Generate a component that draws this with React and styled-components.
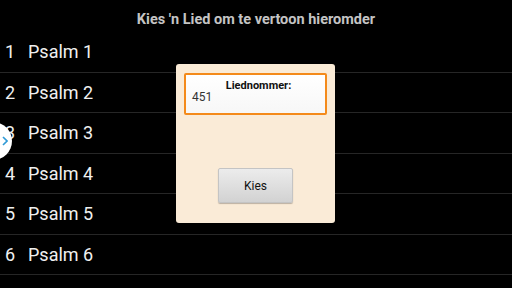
import React from 'react';
import styled, { createGlobalStyle } from 'styled-components';

const Global = createGlobalStyle`
  html, body { margin: 0; padding: 0; background: #000; }
  body { width: 512px; height: 288px; overflow: hidden; font-family: Roboto, "Liberation Sans", sans-serif; }
`;

const Screen = styled.div`
  position: relative;
  width: 512px;
  height: 288px;
  background: #000;
  overflow: hidden;
`;

const Title = styled.div`
  height: 32px;
  padding-top: 12px;
  box-sizing: border-box;
  text-align: center;
  color: #c4c4c4;
  font-weight: 700;
  font-size: 14.5px;
  line-height: 16px;
`;

const List = styled.ul`
  list-style: none;
  margin: 0;
  padding: 0;
`;

const Row = styled.li`
  display: flex;
  align-items: center;
  height: 39.5px;
  border-bottom: 1px solid #262626;
  color: #f0f0f0;
  font-size: 18px;
`;

const Num = styled.span`
  width: 28px;
  padding-left: 5px;
  box-sizing: border-box;
`;

const Handle = styled.div`
  position: absolute;
  left: -26px;
  top: 122px;
  width: 38px;
  height: 38px;
  border-radius: 50%;
  background: #fff;
  display: flex;
  align-items: center;
  justify-content: flex-end;
  padding-right: 4px;
  box-sizing: border-box;
`;

const Dialog = styled.div`
  position: absolute;
  left: 176px;
  top: 64px;
  width: 159px;
  height: 159px;
  background: #faebd7;
  border-radius: 3px;
  display: flex;
  flex-direction: column;
  align-items: center;
  padding-top: 9px;
  box-sizing: border-box;
`;

const Field = styled.div`
  width: 143px;
  height: 42px;
  box-sizing: border-box;
  border: 2px solid #f48a1a;
  border-radius: 2px;
  background: linear-gradient(#ffffff, #f7f7f7);
  padding: 4px 0 0 6px;
  position: relative;
`;

const Label = styled.div`
  text-align: center;
  font-weight: 700;
  font-size: 11px;
  line-height: 13px;
  color: #111;
`;

const Value = styled.div`
  font-size: 12px;
  line-height: 13px;
  color: #333;
  margin-top: -1px;
`;

const Button = styled.button`
  margin-top: 53px;
  width: 75px;
  height: 35px;
  border: 1px solid #c4c4c4;
  border-radius: 2px;
  background: linear-gradient(#ececec, #d2d2d2);
  box-shadow: 0 1px 1px rgba(0, 0, 0, 0.25);
  font-family: Roboto, "Liberation Sans", sans-serif;
  font-size: 12px;
  color: #111;
  padding: 0;
`;

const psalms = [1, 2, 3, 4, 5, 6];

export default function App() {
  return (
    <Screen>
      <Global />
      <Title>Kies 'n Lied om te vertoon hieromder</Title>
      <List>
        {psalms.map((n) => (
          <Row key={n}>
            <Num>{n}</Num>
            <span>Psalm {n}</span>
          </Row>
        ))}
      </List>
      <Handle>
        <svg width="6" height="10" viewBox="0 0 6 10">
          <path d="M1 1 L5 5 L1 9" fill="none" stroke="#2f9ad6" strokeWidth="1.6" />
        </svg>
      </Handle>
      <Dialog>
        <Field>
          <Label>Liednommer:</Label>
          <Value>451</Value>
        </Field>
        <Button>Kies</Button>
      </Dialog>
    </Screen>
  );
}
